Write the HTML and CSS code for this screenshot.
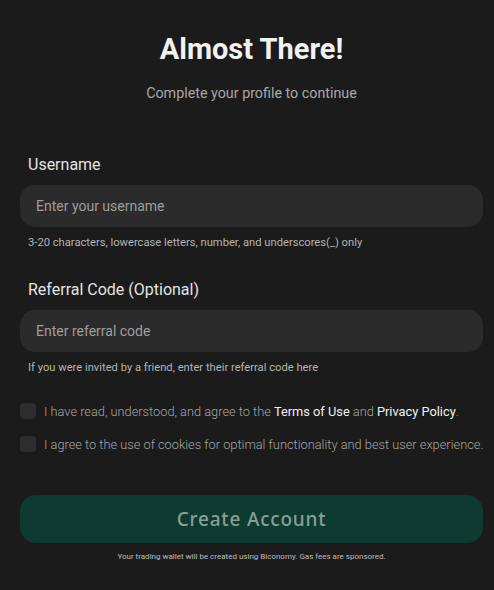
FILE: index.html
```html
<!DOCTYPE html>
<html>
<head>
<meta charset="utf-8">
<link rel="stylesheet" href="styles.css">
</head>
<body>
<div class="page">
  <h1 class="title">Almost There!</h1>
  <p class="subtitle">Complete your profile to continue</p>

  <div class="field first">
    <label class="label">Username</label>
    <div class="input">Enter your username</div>
    <p class="help">3-20 characters, lowercase letters, number, and underscores(_) only</p>
  </div>

  <div class="field second">
    <label class="label">Referral Code (Optional)</label>
    <div class="input">Enter referral code</div>
    <p class="help">If you were invited by a friend, enter their referral code here</p>
  </div>

  <div class="checks">
    <div class="check"><span class="box"></span><span class="ctext">I have read, understood, and agree to the <b>Terms of Use</b> and <b>Privacy Policy</b>.</span></div>
    <div class="check"><span class="box"></span><span class="ctext">I agree to the use of cookies for optimal functionality and best user experience.</span></div>
  </div>

  <div class="button">Create Account</div>
  <p class="foot">Your trading wallet will be created using Biconomy. Gas fees are sponsored.</p>
</div>
</body>
</html>
```

FILE: styles.css
```css
html, body {
  margin: 0;
  padding: 0;
  background: #1b1b1b;
}
body {
  font-family: Roboto, "Liberation Sans", sans-serif;
  color: #e6e6e6;
}
.page {
  width: 494px;
  height: 590px;
  box-sizing: border-box;
  padding: 30px 11px 0 20px;
  display: flex;
  flex-direction: column;
}
.title {
  margin: 0;
  text-align: center;
  font-size: 29px;
  font-weight: 700;
  line-height: 38px;
  color: #f2f2f2;
}
.subtitle {
  margin: 16px 0 0;
  text-align: center;
  font-size: 14.3px;
  line-height: 18px;
  color: #a8a8a8;
}
.field {
  display: flex;
  flex-direction: column;
}
.field.first { margin-top: 53px; }
.field.second { margin-top: 30px; }
.label {
  margin-left: 8px;
  font-size: 16px;
  line-height: 20px;
  color: #e4e4e4;
}
.input {
  margin-top: 10px;
  height: 42px;
  border-radius: 15px;
  background: #2b2b2b;
  padding-left: 16px;
  display: flex;
  align-items: center;
  font-size: 14px;
  color: #9e9e9e;
}
.help {
  margin: 9px 0 0 8px;
  font-size: 11.2px;
  line-height: 14px;
  color: #b4b4b4;
}
.checks {
  margin-top: 28px;
  display: flex;
  flex-direction: column;
  gap: 17px;
}
.check {
  display: flex;
  align-items: center;
  gap: 8px;
  height: 16px;
}
.box {
  width: 16px;
  height: 16px;
  flex: none;
  border-radius: 4px;
  background: #2d2d2d;
}
.ctext {
  font-size: 12.8px;
  font-weight: 300;
  color: #a6a6a6;
  white-space: nowrap;
}
.ctext b {
  font-weight: 400;
  color: #f0f0f0;
}
.button {
  margin-top: 43px;
  height: 48px;
  border-radius: 16px;
  background: #0f3a30;
  display: flex;
  align-items: center;
  justify-content: center;
  font-family: "Noto Sans", "Open Sans", sans-serif;
  font-size: 19px;
  font-weight: 500;
  letter-spacing: 0.8px;
  color: #86a097;
}
.foot {
  margin: 9px 0 0;
  text-align: center;
  font-size: 8px;
  line-height: 10px;
  color: #bdbdbd;
}
```
